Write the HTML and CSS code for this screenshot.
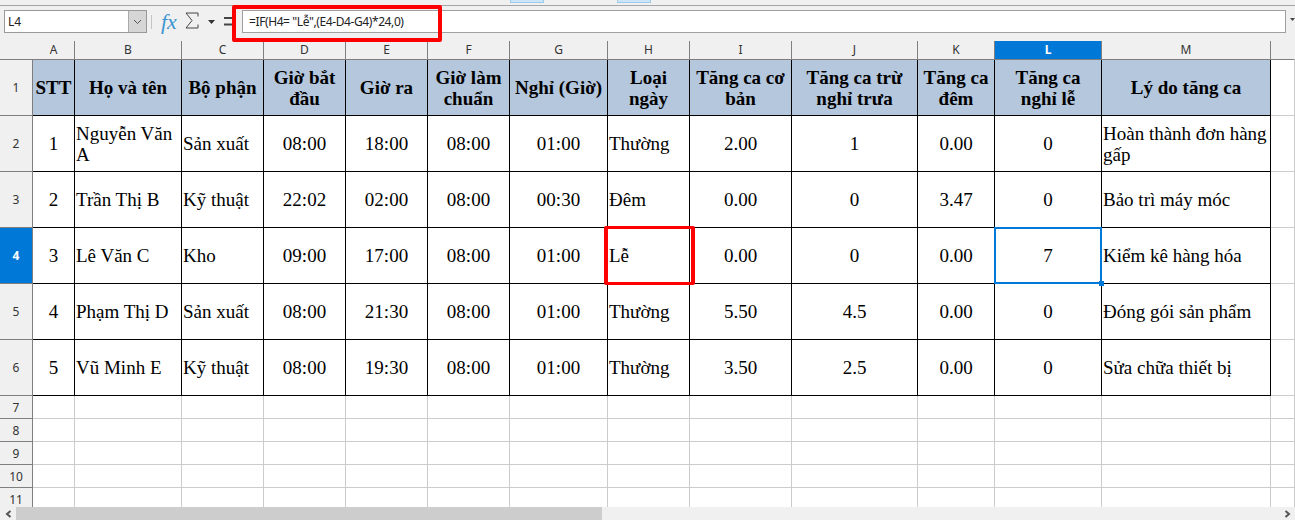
FILE: index.html
```html
<!DOCTYPE html>
<html lang="en">
<head>
    <meta charset="UTF-8">
    <meta name="viewport" content="width=device-width, initial-scale=1.0">
    <title>Bảng tăng ca</title>
    <link rel="stylesheet" href="styles.css">
</head>
<body>
    <div class="top-strip">
        <span class="tab-stub tab-stub-1"></span>
        <span class="tab-stub tab-stub-2"></span>
    </div>

    <div class="formula-bar">
        <div class="name-box">
            <span class="name-value">L4</span>
            <span class="name-drop">
                <svg width="9" height="6" viewBox="0 0 9 6"><path d="M1 1l3.5 3.5L8 1" fill="none" stroke="#555" stroke-width="1"/></svg>
            </span>
        </div>
        <span class="bar-sep"></span>
        <span class="fx-icon">fx</span>
        <svg class="sum-icon" width="14" height="17" viewBox="0 0 14 17"><path d="M13 4.500V1H1l6 7.500L1 16h12v-3.500" fill="none" stroke="#444" stroke-width="1"/></svg>
        <svg class="sum-drop" width="7" height="4" viewBox="0 0 7 4"><path d="M0 0h7L3.500 4z" fill="#333"/></svg>
        <svg class="equals-icon" width="9" height="9" viewBox="0 0 9 9"><path d="M0 1h9M0 7.500h9" stroke="#444" stroke-width="2"/></svg>
        <div class="formula-input">
            <span class="formula-mark"></span>
            =IF(H4= "Lễ",(E4-D4-G4)*24,0)
        </div>
        <svg class="bar-more" width="5" height="3" viewBox="0 0 5 3"><path d="M0 0h5L2.500 3z" fill="#444"/></svg>
    </div>

    <div class="sheet">
        <table class="grid">
            <colgroup>
                <col class="c-row"><col class="c-a"><col class="c-b"><col class="c-c"><col class="c-d"><col class="c-e"><col class="c-f"><col class="c-g"><col class="c-h"><col class="c-i"><col class="c-j"><col class="c-k"><col class="c-l"><col class="c-m"><col>
            </colgroup>
            <thead>
                <tr class="col-heads">
                    <th class="corner"></th>
                    <th>A</th><th>B</th><th>C</th><th>D</th><th>E</th><th>F</th><th>G</th><th>H</th><th>I</th><th>J</th><th>K</th><th class="selected">L</th><th class="no-sep">M</th><th class="no-sep"></th>
                </tr>
            </thead>
            <tbody>
                <tr class="row-tall">
                    <th class="row-head">1</th>
                    <td class="title">STT</td><td class="title">Họ và tên</td><td class="title">Bộ phận</td><td class="title">Giờ bắt đầu</td><td class="title">Giờ ra</td><td class="title">Giờ làm chuẩn</td><td class="title">Nghỉ (Giờ)</td><td class="title">Loại ngày</td><td class="title">Tăng ca cơ bản</td><td class="title">Tăng ca trừ nghỉ trưa</td><td class="title">Tăng ca đêm</td><td class="title">Tăng ca nghỉ lễ</td><td class="title">Lý do tăng ca</td><td class="blank"></td>
                </tr>
                <tr class="row-tall">
                    <th class="row-head">2</th>
                    <td class="mid">1</td><td>Nguyễn Văn A</td><td>Sản xuất</td><td class="mid">08:00</td><td class="mid">18:00</td><td class="mid">08:00</td><td class="mid">01:00</td><td>Thường</td><td class="mid">2.00</td><td class="mid">1</td><td class="mid">0.00</td><td class="mid">0</td><td>Hoàn thành đơn hàng gấp</td><td class="blank"></td>
                </tr>
                <tr class="row-tall">
                    <th class="row-head">3</th>
                    <td class="mid">2</td><td>Trần Thị B</td><td>Kỹ thuật</td><td class="mid">22:02</td><td class="mid">02:00</td><td class="mid">08:00</td><td class="mid">00:30</td><td>Đêm</td><td class="mid">0.00</td><td class="mid">0</td><td class="mid">3.47</td><td class="mid">0</td><td>Bảo trì máy móc</td><td class="blank"></td>
                </tr>
                <tr class="row-tall">
                    <th class="row-head selected">4</th>
                    <td class="mid">3</td><td>Lê Văn C</td><td>Kho</td><td class="mid">09:00</td><td class="mid">17:00</td><td class="mid">08:00</td><td class="mid">01:00</td><td class="marked">Lễ</td><td class="mid">0.00</td><td class="mid">0</td><td class="mid">0.00</td><td class="mid active">7</td><td>Kiểm kê hàng hóa</td><td class="blank"></td>
                </tr>
                <tr class="row-tall">
                    <th class="row-head">5</th>
                    <td class="mid">4</td><td>Phạm Thị D</td><td>Sản xuất</td><td class="mid">08:00</td><td class="mid">21:30</td><td class="mid">08:00</td><td class="mid">01:00</td><td>Thường</td><td class="mid">5.50</td><td class="mid">4.5</td><td class="mid">0.00</td><td class="mid">0</td><td>Đóng gói sản phẩm</td><td class="blank"></td>
                </tr>
                <tr class="row-tall">
                    <th class="row-head">6</th>
                    <td class="mid">5</td><td>Vũ Minh E</td><td>Kỹ thuật</td><td class="mid">08:00</td><td class="mid">19:30</td><td class="mid">08:00</td><td class="mid">01:00</td><td>Thường</td><td class="mid">3.50</td><td class="mid">2.5</td><td class="mid">0.00</td><td class="mid">0</td><td>Sửa chữa thiết bị</td><td class="blank"></td>
                </tr>
                <tr class="row-empty"><th class="row-head">7</th><td class="blank"></td><td class="blank"></td><td class="blank"></td><td class="blank"></td><td class="blank"></td><td class="blank"></td><td class="blank"></td><td class="blank"></td><td class="blank"></td><td class="blank"></td><td class="blank"></td><td class="blank"></td><td class="blank"></td><td class="blank"></td></tr>
                <tr class="row-empty"><th class="row-head">8</th><td class="blank"></td><td class="blank"></td><td class="blank"></td><td class="blank"></td><td class="blank"></td><td class="blank"></td><td class="blank"></td><td class="blank"></td><td class="blank"></td><td class="blank"></td><td class="blank"></td><td class="blank"></td><td class="blank"></td><td class="blank"></td></tr>
                <tr class="row-empty"><th class="row-head">9</th><td class="blank"></td><td class="blank"></td><td class="blank"></td><td class="blank"></td><td class="blank"></td><td class="blank"></td><td class="blank"></td><td class="blank"></td><td class="blank"></td><td class="blank"></td><td class="blank"></td><td class="blank"></td><td class="blank"></td><td class="blank"></td></tr>
                <tr class="row-empty"><th class="row-head">10</th><td class="blank"></td><td class="blank"></td><td class="blank"></td><td class="blank"></td><td class="blank"></td><td class="blank"></td><td class="blank"></td><td class="blank"></td><td class="blank"></td><td class="blank"></td><td class="blank"></td><td class="blank"></td><td class="blank"></td><td class="blank"></td></tr>
                <tr class="row-empty"><th class="row-head">11</th><td class="blank"></td><td class="blank"></td><td class="blank"></td><td class="blank"></td><td class="blank"></td><td class="blank"></td><td class="blank"></td><td class="blank"></td><td class="blank"></td><td class="blank"></td><td class="blank"></td><td class="blank"></td><td class="blank"></td><td class="blank"></td></tr>
            </tbody>
        </table>
    </div>

    <div class="scrollbar">
        <span class="scroll-btn">
            <svg width="7" height="8" viewBox="0 0 7 8"><path d="M5.500 1L2 4l3.500 3" fill="none" stroke="#555" stroke-width="2"/></svg>
        </span>
        <span class="scroll-thumb"></span>
        <span class="scroll-track"></span>
        <span class="scroll-btn">
            <svg width="7" height="8" viewBox="0 0 7 8"><path d="M1.500 1L5 4 1.500 7" fill="none" stroke="#555" stroke-width="2"/></svg>
        </span>
    </div>
</body>
</html>
```
FILE: styles.css
```css
html, body {
    margin: 0;
    height: 100%;
}

body {
    display: flex;
    flex-direction: column;
    height: 520px;
    overflow: hidden;
    background: #fff;
    font-family: "Noto Sans", sans-serif;
}

/* toolbar leftovers above the formula bar */
.top-strip {
    position: relative;
    flex: none;
    height: 5px;
    background: #f0f0f0;
    border-bottom: 1px solid #a6a6a6;
}

.tab-stub {
    position: absolute;
    top: 0;
    width: 32px;
    height: 2px;
    background: #cce4f7;
    border: 1px solid #9ccbee;
    border-top: 0;
}

.tab-stub-1 { left: 510px; }
.tab-stub-2 { left: 617px; }

.formula-bar {
    flex: none;
    display: flex;
    align-items: center;
    height: 35px;
    padding: 0 4px 4px;
    box-sizing: border-box;
    background: #f0f0f0;
}

.formula-bar > * {
    flex: none;
}

.name-box {
    display: flex;
    width: 143px;
    height: 23px;
    box-sizing: border-box;
    background: #fff;
    border: 1px solid #999;
    font-size: 12px;
    color: #222;
}

.name-value {
    flex: 1;
    padding-left: 3px;
    line-height: 21px;
}

.name-drop {
    display: flex;
    align-items: center;
    justify-content: center;
    width: 17px;
    background: #d6d6d6;
    border-left: 1px solid #aaa;
}

.bar-sep {
    width: 1px;
    height: 14px;
    margin-left: 4px;
    background: #c4c4c4;
}

.fx-icon {
    width: 17px;
    margin-left: 9px;
    font-family: "Liberation Serif", serif;
    font-style: italic;
    font-size: 22px;
    line-height: 24px;
    color: #3d94d1;
}

.sum-icon { margin-left: 7px; margin-top: -2px; }
.sum-drop { margin-left: 9px; }
.equals-icon { margin-left: 9px; margin-top: -1px; }

.formula-input {
    position: relative;
    width: 1044px;
    height: 23px;
    margin-left: 9px;
    padding-left: 6px;
    box-sizing: border-box;
    background: #fff;
    border: 1px solid #a0a0a0;
    font-size: 12px;
    letter-spacing: -0.4px;
    line-height: 21px;
    color: #222;
    white-space: nowrap;
}

.bar-more { margin-left: 4px; margin-top: -5px; }

.formula-mark {
    position: absolute;
    left: -11px;
    top: -6px;
    width: 202px;
    height: 29px;
    border: 4px solid #ff0000;
    border-radius: 2px;
}

/* sheet */
.sheet {
    flex: 1;
    overflow: hidden;
}

.grid {
    width: 1295px;
    table-layout: fixed;
    border-collapse: separate;
    border-spacing: 0;
    font-family: "Liberation Serif", serif;
    font-size: 19px;
    line-height: 21px;
    color: #000;
}

.c-row { width: 33px; }
.c-a { width: 42px; }
.c-b { width: 107px; }
.c-c { width: 82px; }
.c-d { width: 82px; }
.c-e { width: 82px; }
.c-f { width: 82px; }
.c-g { width: 98px; }
.c-h { width: 82px; }
.c-i { width: 102px; }
.c-j { width: 126px; }
.c-k { width: 77px; }
.c-l { width: 107px; }
.c-m { width: 169px; }

.col-heads th {
    height: 19px;
    padding: 0;
    box-sizing: border-box;
    background: #f0f0f0;
    border-right: 1px solid #7f7f7f;
    border-bottom: 1px solid #7f7f7f;
    font-family: "Noto Sans", sans-serif;
    font-size: 12px;
    font-weight: normal;
    line-height: 18px;
    color: #333;
}

.col-heads .no-sep { border-right-color: #f0f0f0; }
.col-heads th:nth-child(14) { border-right-color: #7f7f7f; }
.col-heads .corner { border-right: 0; }

.row-tall { height: 56px; }
.row-empty { height: 23px; }

.row-head {
    padding: 0;
    background: #f0f0f0;
    border-right: 1px solid #7f7f7f;
    border-bottom: 1px solid #7f7f7f;
    font-family: "Noto Sans", sans-serif;
    font-size: 12px;
    font-weight: normal;
    color: #333;
}

.col-heads .selected,
.row-head.selected {
    background: #0078d7;
    color: #fff;
    font-weight: bold;
}

td {
    padding: 0 1px;
    border-right: 1px solid #000;
    border-bottom: 1px solid #000;
    vertical-align: middle;
}

.title {
    padding: 0 2px;
    background: #b4c7dc;
    font-weight: bold;
    text-align: center;
}

.mid { text-align: center; }

td.blank {
    border-right-color: #ccc;
    border-bottom-color: #ccc;
}

.marked,
.active {
    position: relative;
}

/* red annotation drawn over the H4 cell */
.marked::after {
    content: "";
    position: absolute;
    left: -4px;
    top: -2px;
    right: -6px;
    bottom: -2px;
    border: 3px solid #ff0000;
    border-left-width: 4px;
    border-right-width: 4px;
    border-radius: 2px;
}

/* cell cursor on L4 */
.active::before {
    content: "";
    position: absolute;
    left: -1px;
    top: -1px;
    right: -1px;
    bottom: -1px;
    border: 2px solid #0078d7;
}

.active::after {
    content: "";
    position: absolute;
    right: -3px;
    bottom: -3px;
    width: 5px;
    height: 5px;
    background: #0078d7;
}

.scrollbar {
    flex: none;
    display: flex;
    height: 13px;
    background: #f0f0f0;
}

.scroll-btn {
    display: flex;
    align-items: center;
    justify-content: center;
    flex: none;
    width: 16px;
}

.scroll-thumb {
    flex: none;
    width: 586px;
    background: #cdcdcd;
}

.scroll-track { flex: 1; }
```
